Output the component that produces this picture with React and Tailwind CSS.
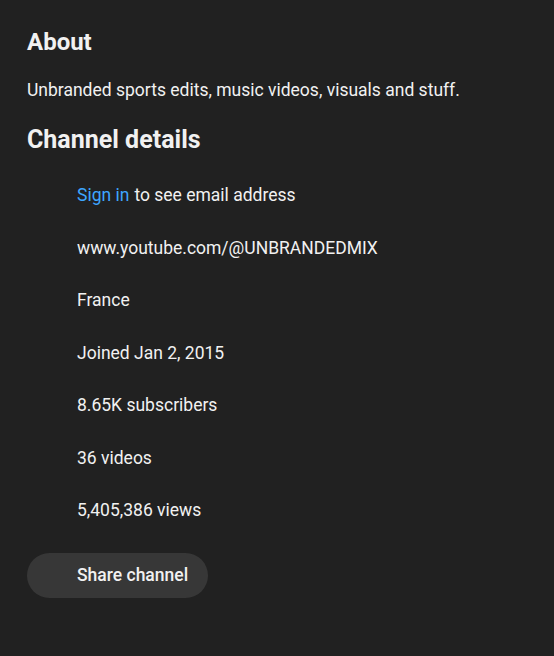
export default function App() {
  const rows = [
    "www.youtube.com/@UNBRANDEDMIX",
    "France",
    "Joined Jan 2, 2015",
    "8.65K subscribers",
    "36 videos",
    "5,405,386 views",
  ];
  return (
    <div className="w-[554px] h-[656px] bg-[#212121] text-[#f1f1f1] px-[27px] pt-[27px]" style={{ fontFamily: "Roboto, 'Liberation Sans', sans-serif" }}>
      <h2 className="text-[24px] leading-[30px] font-bold">About</h2>
      <p className="mt-[21px] text-[17.5px] leading-[24px]">Unbranded sports edits, music videos, visuals and stuff.</p>
      <h2 className="mt-[21px] text-[25px] leading-[34px] font-bold">Channel details</h2>
      <div className="mt-[12px] pl-[50px] flex flex-col">
        <div className="h-[52.5px] flex items-center text-[17.5px]">
          <span className="text-[#3ea6ff]">Sign in</span>
          <span className="ml-[5px]">to see email address</span>
        </div>
        {rows.map((r) => (
          <div key={r} className="h-[52.5px] flex items-center text-[17.5px]">{r}</div>
        ))}
      </div>
      <button className="mt-[16px] h-[45px] w-[181px] rounded-full bg-[#373737] text-[17.5px] font-medium text-[#f1f1f1] flex items-center pl-[50px]">
        Share channel
      </button>
    </div>
  );
}
